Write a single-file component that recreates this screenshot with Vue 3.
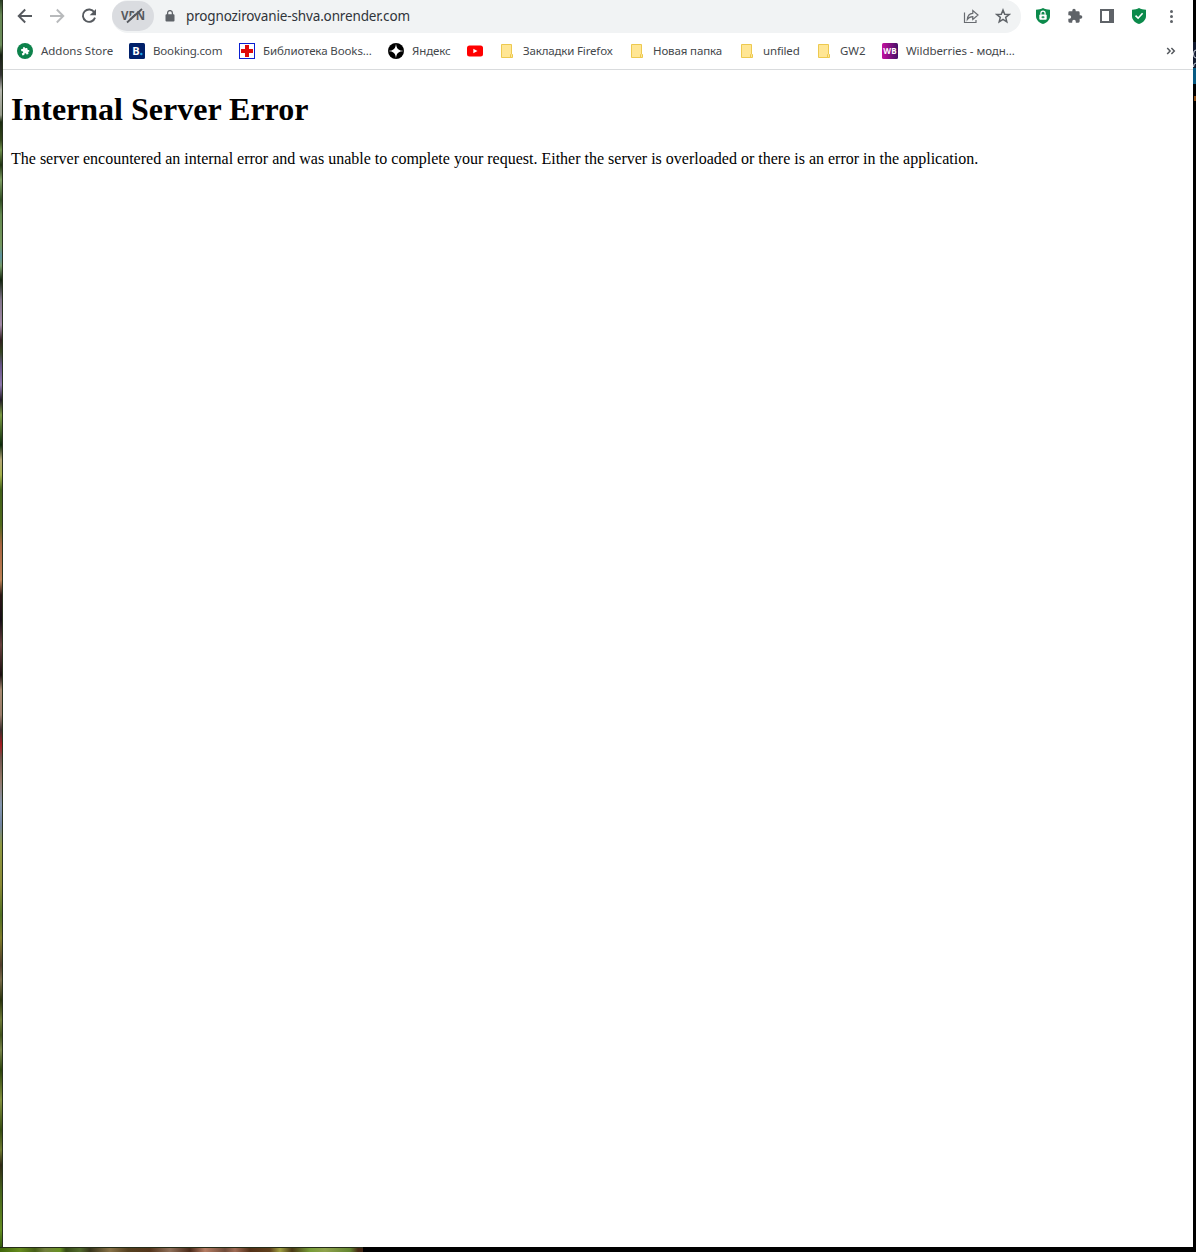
<script setup>
const bookmarks = [
  { icon: 'addons', label: 'Addons Store', w: 112, ls: -0.03 },
  { icon: 'booking', label: 'Booking.com', w: 110, ls: -0.16 },
  { icon: 'cross', label: 'Библиотека Books...', w: 149, ls: -0.11 },
  { icon: 'yandex', label: 'Яндекс', w: 79, ls: -0.1 },
  { icon: 'youtube', label: '', w: 32, ls: 0 },
  { icon: 'folder', label: 'Закладки Firefox', w: 130, ls: -0.16 },
  { icon: 'folder', label: 'Новая папка', w: 110, ls: -0.13 },
  { icon: 'folder', label: 'unfiled', w: 77, ls: -0.15 },
  { icon: 'folder', label: 'GW2', w: 66, ls: 0 },
  { icon: 'wb', label: 'Wildberries - модн...', w: 150, ls: -0.07 },
]
</script>

<template>
  <div class="desktop">
    <div class="window">
      <header class="toolbar">
        <svg class="nav" viewBox="0 0 16 16"><path d="M15 8H2M8.200 1.500 1.700 8l6.500 6.500" /></svg>
        <svg class="nav off" viewBox="0 0 16 16"><path d="M1 8h13M7.800 1.500 14.300 8l-6.500 6.500" /></svg>
        <svg class="nav" viewBox="0 0 16 16"><path d="M13.300 4.300A6.200 6.200 0 1 0 14 9.600" /><path class="solid" d="M15 1v6.300H8.700z" /></svg>
        <div class="address">
          <div class="vpn">
            <span>VPN</span>
            <svg viewBox="0 0 26 16"><path class="halo" d="M5.500 13.500 19.500 .5" /><path class="slash" d="M7 14.500 22 1" /></svg>
          </div>
          <svg class="lock" viewBox="0 0 10 12"><path d="M1.500 4.200h7a1 1 0 0 1 1 1v5.300a1 1 0 0 1-1 1h-7a1 1 0 0 1-1-1V5.200a1 1 0 0 1 1-1z" fill="#5f6368" /><path d="M2.600 5V3a2.400 2.400 0 0 1 4.800 0v2" fill="none" stroke="#5f6368" stroke-width="1.300" /></svg>
          <span class="url">prognozirovanie-shva.onrender.com</span>
          <svg class="share" viewBox="0 0 16 16"><path d="M1.500 4.500v10h11.500V12M4.300 11.500c.3-4 2.200-6 5.500-6.200V2.500L15 7l-5.200 4.500V8.700c-2.600 0-4.200.9-5.500 2.800z" /></svg>
          <svg class="star" viewBox="0 0 16 16"><path d="m8 2 1.700 4.200 4.500.3-3.500 2.900 1.100 4.400L8 11.400l-3.800 2.400 1.100-4.400-3.500-2.900 4.500-.3z" /></svg>
        </div>
        <div class="extensions">
          <svg viewBox="0 0 16 16"><path d="M8 0c2 1.100 4.200 1.600 7 1.700V8c0 3.800-3 6.700-7 8-4-1.300-7-4.200-7-8V1.700C3.800 1.600 6 1.100 8 0z" fill="#0b8a4b" /><rect x="4.300" y="6.600" width="7.400" height="5.200" rx="1" fill="#fff" /><path d="M5.900 6.800V5.300a2.100 2.100 0 0 1 4.200 0v1.500" fill="none" stroke="#fff" stroke-width="1.200" /><path d="M8 8v2.300M6.500 9.200h3" stroke="#0b8a4b" /></svg>
          <svg viewBox="0 0 24 24"><path fill="#5f6368" d="M20.500 11H19V7a2 2 0 0 0-2-2h-4V3.500a2.500 2.500 0 0 0-5 0V5H4a2 2 0 0 0-2 2v3.800h1.500a2.700 2.700 0 0 1 0 5.400H2V20a2 2 0 0 0 2 2h3.800v-1.500a2.700 2.700 0 0 1 5.400 0V22H17a2 2 0 0 0 2-2v-4h1.500a2.500 2.500 0 0 0 0-5z" /></svg>
          <svg viewBox="0 0 16 16"><path fill="#5f6368" fill-rule="evenodd" d="M1 1h14v14H1zM3 3v10h7V3z" /></svg>
          <svg viewBox="0 0 16 16"><path d="M8 0c2 1.100 4.200 1.600 7 1.700V8c0 3.800-3 6.700-7 8-4-1.300-7-4.200-7-8V1.700C3.800 1.600 6 1.100 8 0z" fill="#0b8a4b" /><path d="m4.500 7.700 2.600 2.500 4.500-5" fill="none" stroke="#fff" stroke-width="1.600" /></svg>
          <svg viewBox="0 0 16 16" fill="#5f6368"><circle cx="8.500" cy="3.500" r="1.500" /><circle cx="8.500" cy="8.500" r="1.500" /><circle cx="8.500" cy="13.500" r="1.500" /></svg>
        </div>
      </header>
      <nav class="bookmarks">
        <div v-for="(b, i) in bookmarks" :key="i" class="bookmark" :style="{ width: b.w + 'px' }">
          <svg viewBox="0 0 16 16">
            <template v-if="b.icon === 'addons'">
              <circle cx="8" cy="8" r="8" fill="#0d824b" />
              <path fill="#fff" transform="translate(8.200 8) rotate(-12) scale(.38) translate(-12 -12)" d="M20.500 11H19V7a2 2 0 0 0-2-2h-4V3.500a2.500 2.500 0 0 0-5 0V5H4a2 2 0 0 0-2 2v3.800h1.500a2.700 2.700 0 0 1 0 5.400H2V20a2 2 0 0 0 2 2h3.800v-1.500a2.700 2.700 0 0 1 5.400 0V22H17a2 2 0 0 0 2-2v-4h1.500a2.500 2.500 0 0 0 0-5z" />
            </template>
            <template v-else-if="b.icon === 'booking'">
              <rect width="16" height="16" rx="1.500" fill="#00206a" />
              <text x="3.300" y="12" class="glyph" font-size="11">B</text>
              <circle cx="12.300" cy="11" r="1.200" fill="#1ba4e8" />
            </template>
            <template v-else-if="b.icon === 'cross'">
              <rect x=".5" y=".5" width="15" height="15" fill="#fff" stroke="#0b1fd0" />
              <path fill="#e00a0a" d="M6 2h4v4h4v4h-4v4H6v-4H2V6h4z" />
            </template>
            <template v-else-if="b.icon === 'yandex'">
              <circle cx="8" cy="8" r="8" fill="#000" />
              <path fill="#fff" d="M8 0c.2 5.600 2.400 7.800 8 8-5.600.2-7.800 2.400-8 8-.2-5.600-2.400-7.800-8-8 5.600-.2 7.800-2.400 8-8z" />
            </template>
            <template v-else-if="b.icon === 'youtube'">
              <rect y="2.500" width="16" height="11" rx="2.500" fill="#f00" />
              <path fill="#fff" d="M6.300 5.700v4.600l4.200-2.300z" />
            </template>
            <template v-else-if="b.icon === 'folder'">
              <path fill="#ffe694" stroke="#edc94f" d="M2.500 1.500h10v13h-10z" />
              <path fill="#ffe694" stroke="#edc94f" d="M11.500 11.500a1.200 1.200 0 0 1 2 0v3h-2z" />
            </template>
            <template v-else>
              <defs><linearGradient id="wb-fill"><stop offset="0" stop-color="#c4109f" /><stop offset="1" stop-color="#451065" /></linearGradient></defs>
              <rect width="16" height="16" rx="1.500" fill="url(#wb-fill)" />
              <text x="1.200" y="11" class="glyph" font-size="8" textLength="13.500">WB</text>
            </template>
          </svg>
          <span v-if="b.label" :style="{ letterSpacing: b.ls + 'px' }">{{ b.label }}</span>
        </div>
        <svg class="more" viewBox="0 0 10 8"><path d="m1.200 1 2.900 3-2.900 3M5.400 1l2.900 3-2.900 3" /></svg>
      </nav>
      <main class="page">
        <h1>Internal Server Error</h1>
        <p>The server encountered an internal error and was unable to complete your request. Either the server is overloaded or there is an error in the application.</p>
      </main>
    </div>
    <div class="behind">
      <svg viewBox="0 0 3 60"><path d="M0 0h3v26H0z" fill="#10182e" /><path d="M0 26h3v16H0z" fill="#075a83" /><path d="M3 8Q.5 8 .5 12t2.500 4M3 21Q.5 21 .5 25" fill="none" stroke="#d5dbe6" /><path d="M1 54h2v5H1z" fill="#8a4b12" /></svg>
    </div>
    <div class="ground"></div>
  </div>
</template>

<style>
body { margin: 0; background: #000; }
</style>

<style scoped>
.desktop {
  display: grid;
  grid-template: 1247px 5px / 1193px 3px;
  width: 1196px;
  height: 1252px;
  overflow: hidden;
  background: #000;
}
.window {
  box-sizing: border-box;
  padding-left: 3px;
  background: linear-gradient(90deg, transparent 2px, #26301f 2px 3px, #fff 3px),
    linear-gradient(#293c24 0, #668753 15px, #6d8e5c 45px, #182014 55px, #333 75px, #b5b7ae 90px, #969b8b 115px, #1c2b10 122px, #33451c 140px, #6e8f4c 150px, #203312 165px, #7d9d62 180px, #304c23 200px, #648a50 215px, #75985f 245px, #5c93a0 256px, #769b69 266px, #12220e 280px, #82768b 300px, #a38ba8 325px, #301f22 340px, #354521 352px, #665387 365px, #8d78ac 385px, #211b27 400px, #7a9b42 415px, #0c2a0b 445px, #b5a777 460px, #a3b149 475px, #405f18 490px, #506a1b 525px, #a96440 545px, #bc8154 580px, #2b1715 595px, #150e16 620px, #67403d 645px, #190e10 675px, #a88b71 690px, #9b7d6b 715px, #3c2e2e 730px, #a61b20 745px, #71554f 758px, #947868 780px, #8497b0 805px, #7284a0 825px, #8e9941 845px, #8b8a35 885px, #4f7022 915px, #7f7c29 938px, #503c2c 965px, #786b47 980px, #29330c 1000px, #6e7a36 1020px, #40511c 1035px, #788448 1050px, #2b430c 1070px, #83913c 1100px, #354c10 1130px, #6e7a30 1150px, #302915 1165px, #45621b 1190px, #648d20 1230px, #345d0c 1247px);
}
.toolbar {
  display: flex;
  align-items: center;
  height: 33px;
  padding-left: 14px;
  gap: 16px;
}
.nav { width: 16px; height: 16px; margin-bottom: 1px; fill: none; stroke: #565a5f; stroke-width: 1.9; }
.nav .solid { fill: #565a5f; stroke: none; }
.nav.off { stroke: #b8babc; }
.address {
  display: flex;
  align-items: center;
  box-sizing: border-box;
  width: 909px;
  height: 33px;
  margin-left: -1px;
  padding-right: 10px;
  padding-bottom: 1px;
  border-radius: 16px;
  background: #f1f3f4;
}
.vpn { position: relative; width: 42px; height: 30px; border-radius: 15px; background: #dadce0; color: #56595e; }
.vpn span { display: block; width: 42px; text-align: center; font: bold 11.500px/30px "Open Sans", sans-serif; }
.vpn svg { position: absolute; left: 8px; top: 7px; width: 26px; height: 16px; fill: none; }
.halo { stroke: #dadce0; stroke-width: 1.5; }
.slash { stroke: #56595e; stroke-width: 1.8; }
.lock { width: 10px; height: 12px; margin-left: 11px; margin-bottom: 1px; }
.url { flex: 1; margin-left: 11px; font: 13.500px/32px "Noto Sans", sans-serif; letter-spacing: -.14px; color: #30343a; }
.share, .star { width: 16px; height: 16px; fill: none; stroke: #686b70; stroke-width: 1.2; }
.star { margin-left: 16px; stroke: #5f6368; stroke-width: 1.5; }
.extensions { display: flex; gap: 16px; margin-left: -2px; margin-bottom: 1px; }
.extensions svg { width: 16px; height: 16px; }
.bookmarks {
  display: flex;
  align-items: center;
  box-sizing: border-box;
  height: 37px;
  padding-left: 14px;
  border-bottom: 1px solid #d9dbdd;
}
.bookmark { display: flex; flex: none; align-items: center; gap: 8px; font: 11.500px/18px "Noto Sans", sans-serif; color: #44474b; white-space: nowrap; }
.bookmark svg { flex: none; width: 16px; height: 16px; }
.glyph { fill: #fff; font-family: "Open Sans", sans-serif; font-weight: bold; }
.more { width: 10px; height: 8px; margin-left: auto; margin-right: 17px; fill: none; stroke: #54585d; stroke-width: 1.5; }
.page { padding: 0 8px; font-family: "Liberation Serif", serif; color: #000; }
h1 { margin: 21px 0 22px; font-size: 32px; line-height: 37px; }
p { margin: 0; font-size: 16px; line-height: 18px; white-space: nowrap; }
.behind { padding-top: 42px; }
.behind svg { display: block; width: 3px; height: 60px; }
.ground {
  width: 363px;
  height: 5px;
  background: linear-gradient(#252c19 0 1px, transparent 1px),
    linear-gradient(90deg, #3e650b, #668c1d 20px, #465e16 35px, #73803e 45px, #689222 60px, #364a16 66px, #526b2d 80px, #36341a 90px, #897348 110px, #55401f 128px, #54351b 150px, #90705a 170px, #4a2918 190px, #b67d64 205px, #704b39 225px, #a06b55 235px, #533017 250px, #60401c 270px, #a1a243 280px, #493713 292px, #779d38 310px, #8fa24c 325px, #638530 350px, #442713 358px);
}
</style>
